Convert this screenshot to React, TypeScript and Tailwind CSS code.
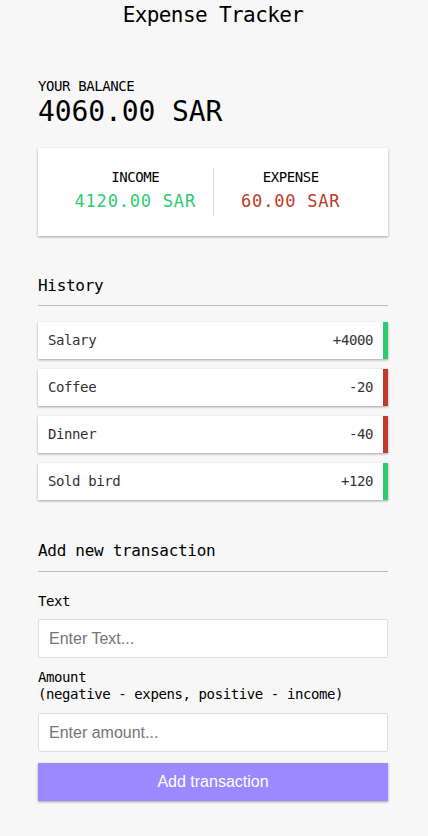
import { useState } from 'react';

const mono = "font-['DejaVu_Sans_Mono',monospace]";
const shadow = 'shadow-[0_1px_3px_rgba(0,0,0,0.12),0_1px_2px_rgba(0,0,0,0.24)]';

type Tx = { id: number; text: string; amount: number };

const initial: Tx[] = [
  { id: 1, text: 'Salary', amount: 4000 },
  { id: 2, text: 'Coffee', amount: -20 },
  { id: 3, text: 'Dinner', amount: -40 },
  { id: 4, text: 'Sold bird', amount: 120 },
];

export default function App() {
  const [transactions] = useState<Tx[]>(initial);
  const [text, setText] = useState('');
  const [amount, setAmount] = useState('');

  const income = transactions.filter((t) => t.amount > 0).reduce((s, t) => s + t.amount, 0);
  const expense = transactions.filter((t) => t.amount < 0).reduce((s, t) => s - t.amount, 0);
  const balance = income - expense;

  return (
    <div className={`min-h-[836px] bg-[#f7f7f7] text-black ${mono}`}>
      <div className="w-[350px] ml-[38px] pb-[35px]">
        <h2 className="h-[30px] text-center text-[21px] leading-[31px] tracking-[-0.6px]">Expense Tracker</h2>

        <h4 className="mt-[47px] text-[14px] leading-[18px] tracking-[-0.4px] uppercase">Your Balance</h4>
        <h1 className="text-[28px] leading-[34px] tracking-[-0.1px]">{balance.toFixed(2)} SAR</h1>

        <div className={`mt-[19px] flex bg-white py-[20px] px-[20px] ${shadow}`}>
          <div className="flex-1 border-r border-[#dedede] text-center">
            <h4 className="text-[14px] leading-[18px] tracking-[-0.4px] uppercase">Income</h4>
            <p className="text-[17px] leading-[30px] tracking-[0.8px] text-[#2ecc71]">{income.toFixed(2)} SAR</p>
          </div>
          <div className="flex-1 text-center">
            <h4 className="text-[14px] leading-[18px] tracking-[-0.4px] uppercase">Expense</h4>
            <p className="text-[17px] leading-[30px] tracking-[0.8px] text-[#c0392b]">{expense.toFixed(2)} SAR</p>
          </div>
        </div>

        <h3 className="mt-[38px] border-b border-[#bbb] pb-[7px] text-[16px] leading-[24px] tracking-[-0.3px]">History</h3>
        <ul className="mt-[16px] flex flex-col gap-[10px]">
          {transactions.map((t) => (
            <li
              key={t.id}
              className={`flex h-[37px] items-center justify-between bg-white px-[10px] text-[14px] tracking-[-0.4px] text-[#333] border-r-[5px] ${shadow} ${
                t.amount < 0 ? 'border-[#c0392b]' : 'border-[#2ecc71]'
              }`}
            >
              <span>{t.text}</span>
              <span>
                {t.amount < 0 ? '-' : '+'}
                {Math.abs(t.amount)}
              </span>
            </li>
          ))}
        </ul>

        <h3 className="mt-[39px] border-b border-[#bbb] pb-[8px] text-[16px] leading-[24px] tracking-[-0.3px]">Add new transaction</h3>
        <form onSubmit={(e) => e.preventDefault()}>
          <label className="mt-[19px] block text-[14px] leading-[20px] tracking-[-0.4px]">Text</label>
          <input
            type="text"
            value={text}
            onChange={(e) => setText(e.target.value)}
            placeholder="Enter Text..."
            className="mt-[8px] block h-[39px] w-full rounded-[2px] border border-[#dedede] bg-white px-[10px] font-['Liberation_Sans',Arial,sans-serif] text-[16px] placeholder:text-[#757575] outline-none"
          />
          <label className="mt-[11px] block text-[14px] leading-[17px] tracking-[-0.4px]">
            Amount
            <br />
            (negative - expens, positive - income)
          </label>
          <input
            type="number"
            value={amount}
            onChange={(e) => setAmount(e.target.value)}
            placeholder="Enter amount..."
            className="mt-[10px] block h-[39px] w-full rounded-[2px] border border-[#dedede] bg-white px-[10px] font-['Liberation_Sans',Arial,sans-serif] text-[16px] placeholder:text-[#757575] outline-none"
          />
          <button
            type="submit"
            className={`mt-[11px] block h-[38px] w-full bg-[#9c88ff] font-['Liberation_Sans',Arial,sans-serif] text-[16px] text-white ${shadow}`}
          >
            Add transaction
          </button>
        </form>
      </div>
    </div>
  );
}
